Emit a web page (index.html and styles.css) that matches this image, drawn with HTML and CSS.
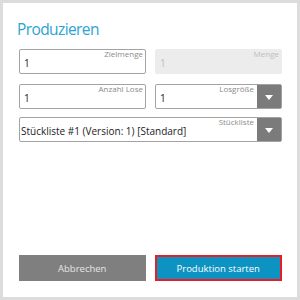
FILE: index.html
```html
<!DOCTYPE html>
<html lang="de">
<head>
    <meta charset="UTF-8">
    <title>Produzieren</title>
    <link rel="stylesheet" href="styles.css">
</head>
<body>
    <div class="dialog">
        <h1 class="title">Produzieren</h1>

        <div class="row row-first">
            <div class="field">
                <span class="label">Zielmenge</span>
                <span class="value">1</span>
            </div>
            <div class="field disabled">
                <span class="label">Menge</span>
                <span class="value">1</span>
            </div>
        </div>

        <div class="row row-second">
            <div class="field">
                <span class="label">Anzahl Lose</span>
                <span class="value">1</span>
            </div>
            <div class="field select">
                <div class="select-body">
                    <span class="label">Losgröße</span>
                    <span class="value">1</span>
                </div>
                <div class="select-button"><span class="arrow"></span></div>
            </div>
        </div>

        <div class="row row-third">
            <div class="field select wide">
                <div class="select-body">
                    <span class="label">Stückliste</span>
                    <span class="value">Stückliste #1 (Version: 1) [Standard]</span>
                </div>
                <div class="select-button"><span class="arrow"></span></div>
            </div>
        </div>

        <div class="actions">
            <button class="btn btn-cancel">Abbrechen</button>
            <button class="btn btn-primary">Produktion starten</button>
        </div>
    </div>
</body>
</html>
```

FILE: styles.css
```css
/* Grundlayout */
html, body {
    margin: 0;
    padding: 0;
}
body {
    font-family: "Open Sans", "Noto Sans", Arial, sans-serif;
    color: #333;
    background: #fff;
}

/* Dialograhmen */
.dialog {
    width: 300px;
    height: 300px;
    box-sizing: border-box;
    border: 3px solid #dcdcdc;
    padding: 0 15px 16px 16px;
    display: flex;
    flex-direction: column;
}

.title {
    margin: 16px 0 0 -2px;
    font-size: 15.5px;
    font-weight: normal;
    line-height: 20px;
    color: #2ba3d4;
    letter-spacing: -0.6px;
}

/* Eingabezeilen */
.row {
    display: grid;
    grid-template-columns: 1fr 1fr;
    gap: 9px;
}
.row-first { margin-top: 10px; }
.row-second { margin-top: 10px; }
.row-third { margin-top: 8px; grid-template-columns: 1fr; }

.field {
    height: 25px;
    box-sizing: border-box;
    border: 1px solid #a3a3a3;
    border-radius: 2px;
    display: flex;
    flex-direction: column;
    padding: 0 2px 0 4px;
}
.field .label {
    align-self: flex-end;
    font-size: 8px;
    line-height: 6px;
    color: #8a8a8a;
    margin-top: 1px;
}
.field .value {
    font-size: 10px;
    line-height: 12px;
    color: #222;
}

.field.disabled {
    border-color: #ececec;
    background: #ececec;
}
.field.disabled .label,
.field.disabled .value {
    color: #bdbdbd;
}

/* Auswahlfelder mit Knopf */
.field.select {
    flex-direction: row;
    padding: 0;
}
.select-body {
    flex: 1;
    display: flex;
    flex-direction: column;
    padding: 0 3px 0 4px;
}
.select-button {
    width: 24px;
    background: #7b7b7b;
    display: flex;
    align-items: center;
    justify-content: center;
}
.arrow {
    width: 0;
    height: 0;
    border-left: 4px solid transparent;
    border-right: 4px solid transparent;
    border-top: 5px solid #fff;
    margin-top: 2px;
}
.field.wide .select-body {
    padding-left: 1px;
}

/* Schaltflächen */
.actions {
    margin-top: auto;
    display: grid;
    grid-template-columns: 1fr 1fr;
    gap: 8px;
}
.btn {
    height: 26px;
    border: none;
    font-family: inherit;
    font-size: 9.5px;
    color: #fff;
    padding: 0;
}
.btn-cancel {
    background: #7f7f7f;
    color: #e6e6e6;
    margin-right: 1px;
}
.btn-primary {
    background: #0c93c1;
    border: 2px solid #ea1c24;
}
```
